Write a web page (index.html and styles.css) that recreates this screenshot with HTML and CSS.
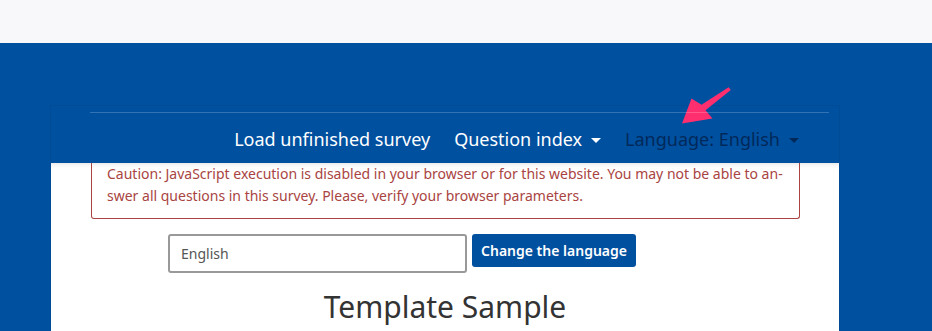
FILE: index.html
```html
<!DOCTYPE html>
<html>
    <head>
        <meta charset="utf-8">
        <title>Template Sample</title>
        <link rel="stylesheet" href="styles.css">
    </head>
    <body>
        <div class="topbar"></div>
        <div class="page">
            <div class="survey">
                <nav class="navbar">
                    <a class="nav-link">Load unfinished survey</a>
                    <a class="nav-link dropdown">Question index</a>
                    <a class="nav-link dropdown muted">Language: English</a>
                </nav>
                <div class="survey-body">
                    <div class="alert">
                        Caution: JavaScript execution is disabled in your browser or for this website. You may not be able to an-<br>
                        swer all questions in this survey. Please, verify your browser parameters.
                    </div>
                    <form class="lang-form">
                        <input type="text" class="lang-input" value="English">
                        <button type="button" class="btn">Change the language</button>
                    </form>
                    <h1 class="title">Template Sample</h1>
                </div>
            </div>
        </div>
        <svg class="pointer" width="60" height="50" viewBox="0 0 60 50">
            <path d="M48.6 2.3 L50.8 4.9 L25.5 25.3 L32.5 33.5 L2 38.5 L11.5 13.5 L21.5 19.7 Z" fill="#ff2e6e"/>
        </svg>
    </body>
</html>
```

FILE: styles.css
```css
body {
    margin: 0;
    background-color: #0050a0;
    font-family: "Noto Sans", sans-serif;
    height: 331px;
    overflow: hidden;
}

.topbar {
    height: 43px;
    background-color: #f8f8fa;
}

.page {
    width: 790px;
    margin: 62px 0 0 50px;
}

.survey {
    border: 1px solid rgba(0, 0, 0, 0.06);
    border-bottom: 0;
    padding-top: 6px;
}

.navbar {
    position: relative;
    z-index: 1;
    box-sizing: border-box;
    margin: 0 10px 0 39px;
    border-top: 1px solid rgba(255, 255, 255, 0.2);
    height: 51px;
    display: flex;
    align-items: center;
    justify-content: flex-end;
    gap: 24px;
    padding: 2px 30px 0 0;
    font-size: 18px;
}

.nav-link {
    color: #fff;
    white-space: nowrap;
}

.nav-link.muted {
    color: #00295a;
}

.dropdown::after {
    content: "";
    display: inline-block;
    margin-left: 9px;
    vertical-align: 3px;
    border-top: 5px solid currentColor;
    border-left: 5px solid transparent;
    border-right: 5px solid transparent;
}

.survey-body {
    background-color: #fff;
    height: 170px;
    overflow: hidden;
    box-shadow: inset 0 5px 5px -4px rgba(0, 0, 0, 0.12);
}

.alert {
    margin: 0 39px 0 40px;
    padding: 0 14px 11px 15px;
    border: 1px solid #a94442;
    border-top: 0;
    border-radius: 0 0 3px 3px;
    color: #a94442;
    font-size: 14px;
    line-height: 22px;
}

.lang-form {
    display: flex;
    align-items: flex-start;
    gap: 5px;
    margin: 15px 0 0 117px;
}

.lang-input {
    box-sizing: border-box;
    width: 299px;
    height: 39px;
    padding: 0 11px;
    border: 2px solid #999;
    border-radius: 3px;
    font-family: "Noto Sans", sans-serif;
    font-size: 14px;
    color: #555;
}

.btn {
    box-sizing: border-box;
    width: 164px;
    height: 33px;
    border: 0;
    border-radius: 3px;
    background-color: #0050a0;
    color: #fff;
    font-family: "Noto Sans", sans-serif;
    font-size: 14px;
    font-weight: 600;
}

.title {
    margin: 13px 0 0;
    text-align: center;
    font-size: 30px;
    font-weight: 400;
    color: #333;
}

.pointer {
    position: absolute;
    left: 680px;
    top: 85px;
}
```
